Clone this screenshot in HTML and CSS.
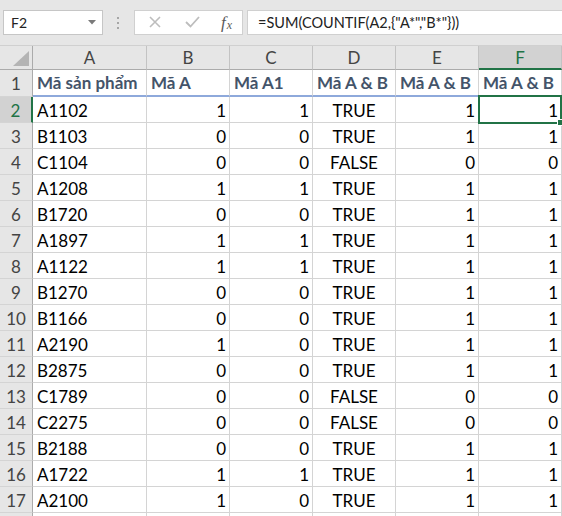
FILE: index.html
```html
<!DOCTYPE html>
<html lang="vi">
<head>
  <meta charset="UTF-8">
  <title>COUNTIF</title>
  <link rel="stylesheet" href="styles.css">
</head>
<body>
  <div class="formula-bar">
    <div class="name-box">
      <span>F2</span>
      <svg class="drop" width="8" height="5" viewBox="0 0 8 5"><polygon points="0,0 8,0 4,4.5" fill="#7a7a7a"/></svg>
    </div>
    <svg class="grip" width="3" height="12" viewBox="0 0 3 12">
      <rect x="0" y="0" width="2" height="2" fill="#a6a6a6"/>
      <rect x="0" y="5" width="2" height="2" fill="#a6a6a6"/>
      <rect x="0" y="10" width="2" height="2" fill="#a6a6a6"/>
    </svg>
    <div class="fx-buttons">
      <svg width="12" height="12" viewBox="0 0 12 12"><path d="M1 1 L11 11 M11 1 L1 11" stroke="#bdbdbd" stroke-width="1.6" fill="none"/></svg>
      <svg width="15" height="12" viewBox="0 0 15 12"><path d="M1 6 L5.5 10.5 L14 1" stroke="#bdbdbd" stroke-width="1.8" fill="none"/></svg>
      <span class="fx"><i>f</i><i class="x">x</i></span>
    </div>
    <div class="formula-input">=SUM(COUNTIF(A2,{"A*","B*"}))</div>
  </div>

  <div class="sheet" id="sheet">
    <div class="hd corner">
      <svg width="16" height="15" viewBox="0 0 16 15"><polygon points="16,0 16,15 0,15" fill="#b4b4b4"/></svg>
    </div>
    <div class="hd col">A</div>
    <div class="hd col">B</div>
    <div class="hd col">C</div>
    <div class="hd col">D</div>
    <div class="hd col">E</div>
    <div class="hd col sel-col">F</div>

    <div class="hd row">1</div>
    <div class="cell title">Mã sản phẩm</div>
    <div class="cell title">Mã A</div>
    <div class="cell title">Mã A1</div>
    <div class="cell title">Mã A &amp; B</div>
    <div class="cell title">Mã A &amp; B</div>
    <div class="cell title">Mã A &amp; B</div>
  </div>

  <script>
    const rows = [
      ['A1102', 1, 1, 'TRUE', 1, 1],
      ['B1103', 0, 0, 'TRUE', 1, 1],
      ['C1104', 0, 0, 'FALSE', 0, 0],
      ['A1208', 1, 1, 'TRUE', 1, 1],
      ['B1720', 0, 0, 'TRUE', 1, 1],
      ['A1897', 1, 1, 'TRUE', 1, 1],
      ['A1122', 1, 1, 'TRUE', 1, 1],
      ['B1270', 0, 0, 'TRUE', 1, 1],
      ['B1166', 0, 0, 'TRUE', 1, 1],
      ['A2190', 1, 0, 'TRUE', 1, 1],
      ['B2875', 0, 0, 'TRUE', 1, 1],
      ['C1789', 0, 0, 'FALSE', 0, 0],
      ['C2275', 0, 0, 'FALSE', 0, 0],
      ['B2188', 0, 0, 'TRUE', 1, 1],
      ['A1722', 1, 1, 'TRUE', 1, 1],
      ['A2100', 1, 0, 'TRUE', 1, 1]
    ];
    const sheet = document.getElementById('sheet');

    function add(cls, text) {
      const div = document.createElement('div');
      div.className = cls;
      div.textContent = text;
      sheet.appendChild(div);
    }

    rows.forEach((r, i) => {
      const n = i + 2;
      add(n === 2 ? 'hd row sel-row' : 'hd row', n);
      add('cell', r[0]);
      add('cell num', r[1]);
      add('cell num', r[2]);
      add('cell center', r[3]);
      add('cell num', r[4]);
      add(n === 2 ? 'cell num active' : 'cell num', r[5]);
    });

    // partial row 18 at the bottom
    add('hd row', '');
    for (let c = 0; c < 6; c++) add('cell', '');
  </script>
</body>
</html>
```

FILE: styles.css
```css
body {
  margin: 0;
  width: 562px;
  height: 516px;
  overflow: hidden;
  background: #fff;
  font-family: Lato, "Liberation Sans", sans-serif;
}

.formula-bar {
  display: flex;
  align-items: center;
  height: 46px;
  padding: 0 0 0 3px;
  background: #e6e6e6;
  box-sizing: border-box;
  border-bottom: 1px solid #d0d0d0;
}

.name-box {
  display: flex;
  align-items: center;
  justify-content: space-between;
  width: 100px;
  height: 25px;
  margin-top: -1px;
  padding: 0 6px 0 7px;
  box-sizing: border-box;
  background: #fff;
  border: 1px solid #c6c6c6;
  font-size: 14px;
  color: #222;
}

.grip {
  margin: 0 14px 0 14px;
}

.fx-buttons {
  display: flex;
  align-items: center;
  gap: 24px;
  width: 109px;
  height: 25px;
  margin-top: -1px;
  padding: 0 0 0 14px;
  box-sizing: border-box;
  background: #fff;
  border: 1px solid #d0d0d0;
}

.fx {
  font-family: "Liberation Serif", serif;
  font-size: 17px;
  color: #5a5a5a;
  margin-left: -3px;
  line-height: 1;
}

.fx .x {
  font-size: 12px;
  margin-left: 1px;
  position: relative;
  top: 1px;
}

.formula-input {
  flex: 1;
  height: 25px;
  margin: -1px 0 0 4px;
  padding: 0 0 0 10px;
  box-sizing: border-box;
  background: #fff;
  border: 1px solid #d0d0d0;
  border-right: none;
  display: flex;
  align-items: center;
  font-size: 14.5px;
  color: #222;
  white-space: nowrap;
}

.sheet {
  display: grid;
  grid-template-columns: 33px 114px repeat(5, 83px);
  grid-template-rows: 24px 27px repeat(17, 26px);
  font-size: 17px;
}

.hd {
  display: flex;
  align-items: center;
  justify-content: center;
  background: #e6e6e6;
  color: #444;
  box-sizing: border-box;
  border-right: 1px solid #c3c3c3;
  border-bottom: 1px solid #c3c3c3;
}

.corner {
  justify-content: flex-end;
  align-items: flex-end;
  padding: 0 3px 3px 0;
  border-right: 1px solid #ababab;
  border-bottom: 1px solid #ababab;
}

.col {
  border-bottom: 1px solid #ababab;
}

.row {
  border-right: 1px solid #ababab;
  border-bottom: 1px solid #d4d4d4;
  padding-top: 1px;
}

.sel-col {
  background: #d2d2d2;
  color: #217346;
  border-bottom: 2px solid #217346;
}

.sel-row {
  background: #d2d2d2;
  color: #217346;
  border-right: 2px solid #217346;
}

.cell {
  display: flex;
  align-items: center;
  padding: 1px 4px 0 4px;
  box-sizing: border-box;
  border-right: 1px solid #d4d4d4;
  border-bottom: 1px solid #d4d4d4;
  color: #000;
  white-space: nowrap;
  overflow: hidden;
}

.num {
  justify-content: flex-end;
  padding-right: 3px;
}

.center {
  justify-content: center;
}

.title {
  font-weight: bold;
  color: #44546a;
  border-bottom: 2px solid #8ea9db;
  padding: 0 3px 0 4px;
  justify-content: flex-start;
}

.active {
  position: relative;
  overflow: visible;
}

.active::after {
  content: "";
  position: absolute;
  left: -1px;
  top: -2px;
  right: -1px;
  bottom: -2px;
  border: 2px solid #217346;
}

.active::before {
  content: "";
  position: absolute;
  right: -3px;
  bottom: -4px;
  width: 5px;
  height: 5px;
  background: #217346;
  border: 1px solid #fff;
  z-index: 1;
}
```
